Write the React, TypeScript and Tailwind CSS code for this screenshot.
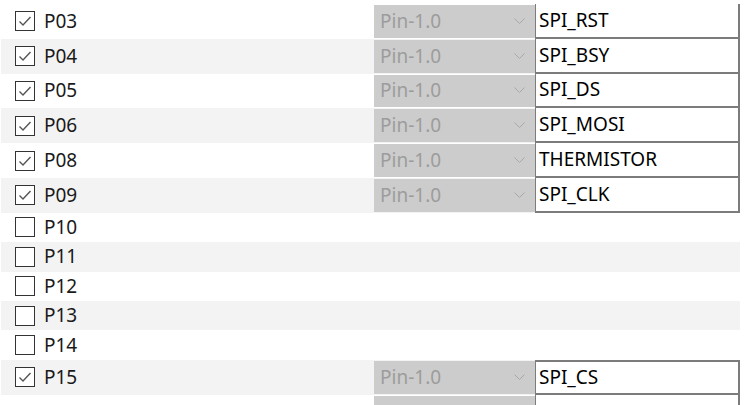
const rows = [
  { pin: "P03", on: true, name: "SPI_RST" },
  { pin: "P04", on: true, name: "SPI_BSY" },
  { pin: "P05", on: true, name: "SPI_DS" },
  { pin: "P06", on: true, name: "SPI_MOSI" },
  { pin: "P08", on: true, name: "THERMISTOR" },
  { pin: "P09", on: true, name: "SPI_CLK" },
  { pin: "P10", on: false },
  { pin: "P11", on: false },
  { pin: "P12", on: false },
  { pin: "P13", on: false },
  { pin: "P14", on: false },
  { pin: "P15", on: true, name: "SPI_CS" },
  { pin: "", on: true, name: "", cut: true },
]

function Check({ on }: { on: boolean }) {
  return (
    <div className="w-[20px] h-[20px] border-[1.5px] border-[#333333] bg-white flex items-center justify-center shrink-0">
      {on && (
        <svg width="14" height="14" viewBox="0 0 14 14" fill="none">
          <path d="M1.5 7.5 L5 11 L12.5 3" stroke="#555555" strokeWidth="1.4" />
        </svg>
      )}
    </div>
  )
}

export default function App() {
  return (
    <div
      className="w-[748px] h-[405px] overflow-hidden bg-white pt-[4px] pl-px text-[19px] text-[#1a1a1a]"
      style={{ fontFamily: '"Noto Sans", "Open Sans", sans-serif' }}
    >
      {rows.map((r, i) => {
        const combo = r.name !== undefined
        const prevCombo = i > 0 && rows[i - 1].name !== undefined
        return (
          <div
            key={i}
            className={`flex items-start w-[739px] ${combo ? "h-[34.8px]" : "h-[29.4px]"} ${
              i % 2 === 1 ? "bg-[#f3f3f3]" : "bg-white"
            }`}
          >
            <div className="flex items-center h-full gap-[9px] pl-[14px] w-[373px]">
              {!r.cut && <Check on={r.on} />}
              <span className="leading-none">{r.pin}</span>
            </div>
            {combo && (
              <div className="flex h-full">
                <div className="w-[161px] my-px bg-[#cccccc] flex items-center justify-between pl-[6px] pr-[10px] text-[#9c9c9c]">
                  {!r.cut && <span className="leading-none">Pin-1.0</span>}
                  {!r.cut && (
                    <svg width="11" height="7" viewBox="0 0 11 7" fill="none">
                      <path d="M0.5 0.5 L5.5 5.5 L10.5 0.5" stroke="#a8a8a8" strokeWidth="1" />
                    </svg>
                  )}
                </div>
                <div
                  className={`w-[205px] bg-white border-l-[1.5px] border-r-2 border-b-2 border-[#7c7c7c] flex items-center pl-[3px] ${
                    i > 0 && !prevCombo ? "border-t-2" : ""
                  }`}
                >
                  <span className="leading-none text-black">{r.name}</span>
                </div>
              </div>
            )}
          </div>
        )
      })}
    </div>
  )
}
